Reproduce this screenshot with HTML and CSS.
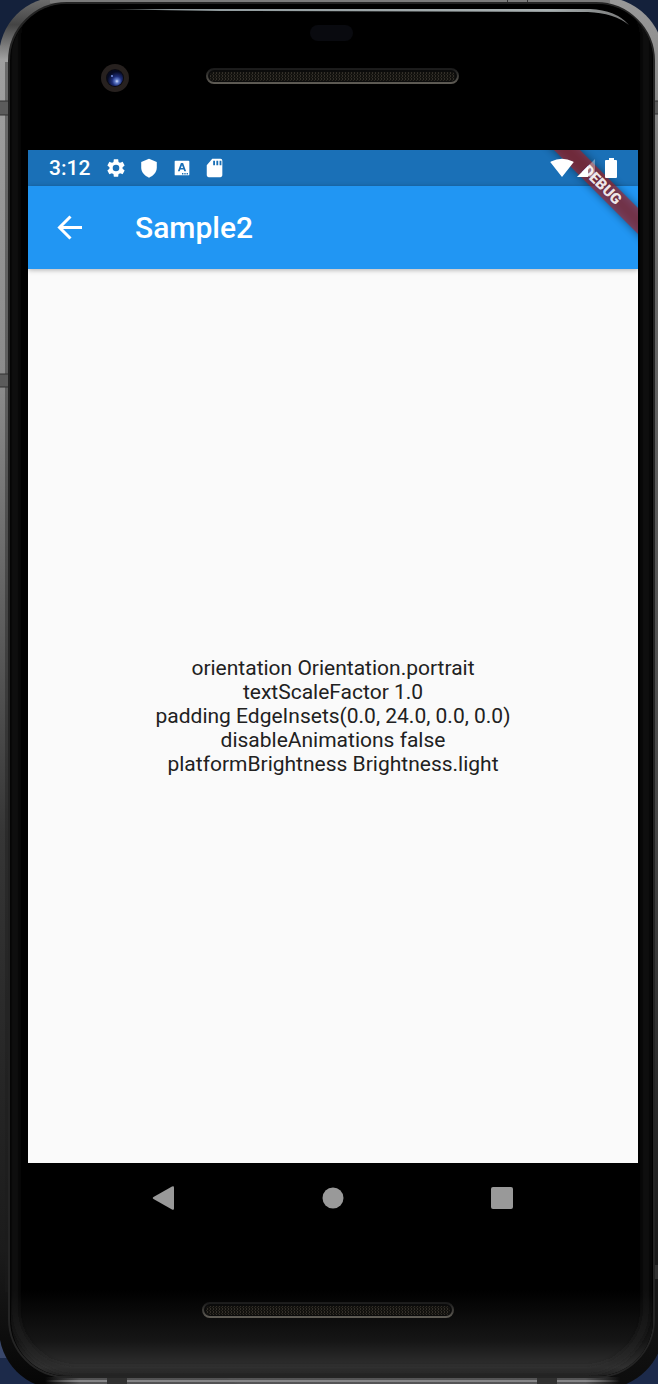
FILE: index.html
```html
<!DOCTYPE html>
<html lang="en">
<head>
<meta charset="utf-8">
<meta name="viewport" content="width=device-width, initial-scale=1">
<title>Sample2</title>
<link rel="stylesheet" href="styles.css">
</head>
<body>
<div class="device">
  <svg class="shell" viewBox="0 0 658 1384" preserveAspectRatio="none" aria-hidden="true">
    <defs>
      <linearGradient id="metal" x1="0" y1="0" x2="0" y2="1">
        <stop offset="0" stop-color="#707070"/><stop offset=".02" stop-color="#444"/><stop offset=".045" stop-color="#a0a0a0"/>
        <stop offset=".28" stop-color="#8a8a8a"/><stop offset=".42" stop-color="#666"/><stop offset=".6" stop-color="#363636"/>
        <stop offset=".9" stop-color="#1b1b1b"/><stop offset="1" stop-color="#050505"/>
      </linearGradient>
      <linearGradient id="metalRight" x1="0" y1="0" x2="0" y2="1">
        <stop offset="0" stop-color="#999"/><stop offset=".2" stop-color="#686868"/><stop offset=".6" stop-color="#444"/><stop offset="1" stop-color="#0c0c0c"/>
      </linearGradient>
      <linearGradient id="chin" x1="0" y1="0" x2="0" y2="1">
        <stop offset="0" stop-color="#000"/><stop offset=".6" stop-color="#161616"/><stop offset=".9" stop-color="#303030"/><stop offset="1" stop-color="#202020"/>
      </linearGradient>
      <linearGradient id="shine" x1="0" y1="0" x2="1" y2="0">
        <stop offset="0" stop-color="#9aa3a5" stop-opacity="0"/><stop offset=".15" stop-color="#8f999c"/><stop offset=".85" stop-color="#a9b1b2"/><stop offset="1" stop-color="#777"/>
      </linearGradient>
      <linearGradient id="edge" x1="0" y1="0" x2="1" y2="0">
        <stop offset="0" stop-color="#858587" stop-opacity="0"/><stop offset=".06" stop-color="#858587"/><stop offset=".94" stop-color="#858587"/><stop offset="1" stop-color="#858587" stop-opacity="0"/>
      </linearGradient>
      <linearGradient id="rim" x1="0" y1="0" x2="0" y2="1">
        <stop offset="0" stop-color="#1b1b1b"/><stop offset="1" stop-color="#5e5b54"/>
      </linearGradient>
      <radialGradient id="lens" cx=".62" cy=".7" r=".6">
        <stop offset="0" stop-color="#d7e3ff"/><stop offset=".2" stop-color="#5f7bc8"/><stop offset=".5" stop-color="#1d2d78"/><stop offset="1" stop-color="#060a20"/>
      </radialGradient>
      <pattern id="mesh" width="3" height="3" patternUnits="userSpaceOnUse">
        <rect width="3" height="3" fill="#12110e"/><rect width="1" height="2" fill="#332f29"/><rect x="2" y="2" width="1" height="1" fill="#292620"/>
      </pattern>
      <filter id="soft" x="-20%" y="-20%" width="140%" height="140%"><feGaussianBlur stdDeviation="3"/></filter>
      <clipPath id="glass"><rect x="11" y="4" width="642" height="1372" rx="56"/></clipPath>
    </defs>
    <rect width="658" height="60" fill="#14213b"/>
    <rect y="1320" width="658" height="64" fill="#1c2a4a"/>
    <path d="M0 1334h20v24H0z" fill="#39476b"/>
    <rect x="-1" y="-3" width="400" height="1392" rx="60" fill="url(#metal)"/>
    <rect x="200" y="-3" width="464" height="1392" rx="62" fill="url(#metalRight)"/>
    <path d="M50 0h560v3H50z" fill="#7b7b7b"/>
    <path d="M45 1377h575v7H45z" fill="url(#edge)" opacity=".6"/>
    <path d="M45 1380h575v2H45z" fill="url(#edge)"/>
    <path d="M5 62h4v1230H5z" fill="#1c1c1c" opacity=".4"/>
    <path d="M0 101h9v14H0zM0 374h10v13H0zM653 101h5v13h-5z" fill="#5b5b5b"/>
    <path d="M0 101h9M0 115h9M0 374h10M0 387h10M653 101h5M653 114h5" stroke="#303030"/>
    <path d="M507 0h1v3h-1zM527 0h1v3h-1z" fill="#333"/>
    <path d="M107 1377h20v7h-20zM537 1377h20v7h-20zM654 1265h4v14h-4z" fill="#303030"/>
    <rect x="9" y="3" width="645" height="1374" rx="58" fill="#050505" stroke="#242424" stroke-width="2"/>
    <g clip-path="url(#glass)">
      <rect x="11" y="4" width="642" height="1372" fill="#000"/>
      <rect x="11" y="1290" width="642" height="86" fill="url(#chin)"/>
      <rect x="15" y="-20" width="631" height="1390" rx="62" fill="none" stroke="#2a2a2a" stroke-width="3" filter="url(#soft)"/>
    </g>
    <path d="M90 9H590Q616 10 629 25Q614 13 588 12L220 11Z" fill="url(#shine)"/>
    <rect x="310" y="25" width="43" height="16" rx="8" fill="#090a0f"/>
    <circle cx="115" cy="78" r="14" fill="#27211f"/>
    <circle cx="115" cy="78" r="9" fill="#0b0b12"/>
    <circle cx="115" cy="78" r="8" fill="url(#lens)"/>
    <circle cx="112" cy="76" r="1" fill="#7894e5"/>
    <rect x="207" y="69" width="251" height="14" rx="7" fill="#0b0b0b" stroke="url(#rim)" stroke-width="2"/>
    <rect x="210" y="72" width="245" height="9" rx="4" fill="url(#mesh)"/>
    <rect x="203" y="1303" width="250" height="14" rx="7" fill="#0b0b0b" stroke="url(#rim)" stroke-width="2"/>
    <rect x="206" y="1306" width="244" height="9" rx="4" fill="url(#mesh)"/>
  </svg>
  <main class="screen">
    <div class="status">
      <span class="clock">3:12</span>
      <svg class="icon notice" viewBox="0 0 24 24"><path fill="currentColor" d="M19.14 12.94c.04-.3.06-.61.06-.94s-.02-.64-.07-.94l2.03-1.58c.18-.14.23-.41.12-.61l-1.92-3.32c-.12-.22-.37-.29-.59-.22l-2.39.96c-.5-.38-1.03-.7-1.62-.94l-.36-2.54c-.04-.24-.24-.41-.48-.41h-3.84c-.24 0-.43.17-.47.41l-.36 2.54c-.59.24-1.13.57-1.62.94l-2.39-.96c-.22-.08-.47 0-.59.22L2.74 8.87c-.12.21-.08.47.12.61l2.03 1.58c-.05.3-.09.63-.09.94s.02.64.07.94l-2.03 1.58c-.18.14-.23.41-.12.61l1.92 3.32c.12.22.37.29.59.22l2.39-.96c.5.38 1.03.7 1.62.94l.36 2.54c.05.24.24.41.48.41h3.84c.24 0 .44-.17.47-.41l.36-2.54c.59-.24 1.13-.56 1.62-.94l2.39.96c.22.08.47 0 .59-.22l1.92-3.32c.12-.22.07-.47-.12-.61zM12 15.6a3.6 3.6 0 1 1 0-7.2 3.6 3.6 0 0 1 0 7.2z"/></svg>
      <svg class="icon notice" viewBox="0 0 24 24"><path fill="currentColor" d="M12 2l8.500 3.500v6c0 5-3.500 9-8.500 11-5-2-8.500-6-8.500-11v-6z"/></svg>
      <svg class="icon notice" viewBox="0 0 24 24"><path fill="currentColor" fill-rule="evenodd" d="M5 4h14q1 0 1 1v14q0 1-1 1H5q-1 0-1-1V5q0-1 1-1zM10.800 6.500L7.500 15.500h2l.7-2h3.600l.7 2h2L13.200 6.500zm1.200 2.500l1.200 3h-2.400zM12 17.500h1.500V19H12zm2.500 0H16V19h-1.500zm2.500 0h1.500V19H17z"/></svg>
      <svg class="icon notice" viewBox="0 0 24 24"><path fill="currentColor" fill-rule="evenodd" d="M9 2h9q2 0 2 2v16q0 2-2 2H5q-2 0-2-2V9zM10 4v5h2V4zm3.500 0v5h2V4zM17 4v5h2V4z"/></svg>
      <span class="spacer"></span>
      <svg class="icon wifi" viewBox="0 0 24 20"><path fill="currentColor" d="M12 19L1 5Q0 4 1 3.500Q12-2 23 3.500Q24 4 23 5z"/></svg>
      <svg class="icon signal" viewBox="0 0 20 20"><path fill="currentColor" opacity=".35" d="M1 19L19 1v18z"/><path fill="currentColor" d="M1 19L12 8v11z"/></svg>
      <svg class="icon battery" viewBox="0 0 12 20"><path fill="currentColor" d="M4 0h5v2h2q1 0 1 1v16q0 1-1 1H1q-1 0-1-1V3q0-1 1-1h3z"/></svg>
    </div>
    <header class="appbar">
      <button class="back" type="button" aria-label="Back"><svg viewBox="0 0 25 25"><path fill="none" stroke="currentColor" stroke-width="3" d="M25 12.500H3M13.500 1.500l-11 11 11 11"/></svg></button>
      <h1 class="title">Sample2</h1>
    </header>
    <section class="content">
      <p class="info">orientation Orientation.portrait<br>textScaleFactor 1.0<br>padding EdgeInsets(0.0, 24.0, 0.0, 0.0)<br>disableAnimations false<br>platformBrightness Brightness.light</p>
    </section>
    <svg class="banner" viewBox="0 0 100 100">
      <defs><filter id="bannerShadow" x="-20%" y="-20%" width="140%" height="140%"><feGaussianBlur stdDeviation="4"/></filter></defs>
      <path d="M6-10h26l78 78v26z" fill="#000" opacity=".45" filter="url(#bannerShadow)"/>
      <path d="M6-10h26l78 78v26z" fill="#b71c1c" fill-opacity=".58"/>
      <text class="banner-text" transform="translate(64 35) rotate(45)" text-anchor="middle" y="5">DEBUG</text>
    </svg>
  </main>
  <nav class="nav" aria-label="System">
    <button class="key" type="button" aria-label="Back"><svg viewBox="0 0 24 24"><path fill="#999" d="M20 .5Q22-.5 22 1.500v21Q22 24.500 20 23.500L1.500 13Q0 12 1.500 11z"/></svg></button>
    <button class="key" type="button" aria-label="Home"><svg viewBox="0 0 24 24"><circle cx="12" cy="12" r="10.500" fill="#999"/></svg></button>
    <button class="key" type="button" aria-label="Overview"><svg viewBox="0 0 24 24"><rect x="1" y="1" width="22" height="22" rx="2" fill="#999"/></svg></button>
  </nav>
</div>
</body>
</html>
```
FILE: styles.css
```css
* {
  box-sizing: border-box;
}

body {
  margin: 0;
  background: #14213b;
  font-family: Roboto, "Noto Sans", sans-serif;
}

.device {
  position: relative;
  isolation: isolate;
  display: flex;
  flex-direction: column;
  min-height: 100vh;
  padding: 150px 20px 151px 28px;
  overflow: hidden;
}

.shell {
  position: absolute;
  inset: 0;
  z-index: -1;
  width: 100%;
  height: 100%;
}

.screen {
  position: relative;
  display: flex;
  flex: 1;
  flex-direction: column;
  overflow: hidden;
  background: #fafafa;
}

.status {
  display: flex;
  align-items: center;
  height: 36px;
  padding: 0 21px;
  background: #1a70b7;
  color: #fff;
}

.clock {
  margin-right: 4px;
  font-size: 21px;
  font-weight: 500;
  line-height: 24px;
}

.icon {
  position: relative;
  z-index: 2;
  display: block;
  flex: none;
  height: 20px;
}

.notice {
  width: 22px;
  height: 22px;
  margin-left: 11px;
}

.spacer {
  flex: 1;
}

.wifi {
  width: 24px;
}

.signal {
  width: 20px;
  margin-left: 2px;
}

.battery {
  width: 12px;
  margin-left: 9px;
}

.appbar {
  display: flex;
  align-items: center;
  height: 83px;
  padding: 0 29px;
  background: #2196f3;
  box-shadow: 0 1px 5px rgba(0, 0, 0, 0.3);
  color: #fff;
}

.back {
  width: 25px;
  height: 25px;
  padding: 0;
  border: 0;
  background: none;
  color: inherit;
}

.back svg,
.key svg {
  display: block;
  width: 100%;
  height: 100%;
}

.title {
  margin: 0 0 0 53px;
  font-size: 30px;
  font-weight: 500;
  line-height: 36px;
}

.content {
  display: flex;
  flex: 1;
  align-items: center;
  justify-content: center;
}

.info {
  margin: 0;
  color: #212121;
  font-size: 21px;
  line-height: 24px;
  text-align: center;
}

.banner {
  position: absolute;
  top: 0;
  right: 0;
  z-index: 1;
  width: 100px;
  height: 100px;
}

.banner-text {
  fill: #fff;
  fill-opacity: 0.9;
  font-size: 15px;
  font-weight: 900;
}

.nav {
  display: grid;
  grid-template-columns: repeat(3, 24px);
  justify-content: center;
  align-items: center;
  gap: 145px;
  height: 70px;
}

.key {
  width: 24px;
  height: 24px;
  padding: 0;
  border: 0;
  background: none;
}
```
